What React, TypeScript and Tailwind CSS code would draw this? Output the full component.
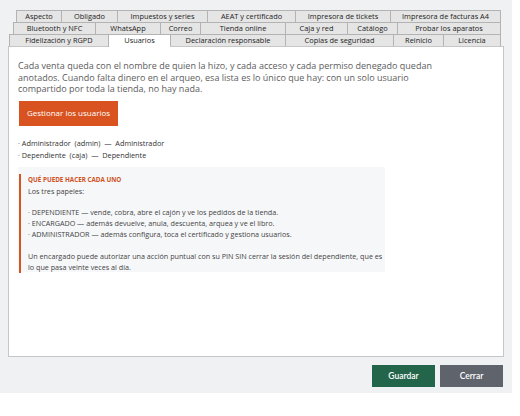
const rows: { label: string; w: number; active?: boolean }[][] = [
  [
    { label: "Aspecto", w: 45 },
    { label: "Obligado", w: 56 },
    { label: "Impuestos y series", w: 90 },
    { label: "AEAT y certificado", w: 88 },
    { label: "Impresora de tickets", w: 95 },
    { label: "Impresora de facturas A4", w: 111 },
  ],
  [
    { label: "Bluetooth y NFC", w: 82 },
    { label: "WhatsApp", w: 65 },
    { label: "Correo", w: 40 },
    { label: "Tienda online", w: 85 },
    { label: "Caja y red", w: 62 },
    { label: "Catálogo", w: 50 },
    { label: "Probar los aparatos", w: 104 },
  ],
  [
    { label: "Fidelización y RGPD", w: 99 },
    { label: "Usuarios", w: 62, active: true },
    { label: "Declaración responsable", w: 115 },
    { label: "Copias de seguridad", w: 108 },
    { label: "Reinicio", w: 50 },
    { label: "Licencia", w: 58 },
  ],
];

const offsets = ["ml-2", "ml-[5px]", "ml-px"];

function TabRow({ tabs, offset }: { tabs: typeof rows[number]; offset: string }) {
  return (
    <div className={`flex h-[12px] ${offset}`}>
      {tabs.map((t, i) => (
        <div
          key={t.label}
          style={{ width: t.w }}
          className={
            "flex items-center justify-center border-t border-l border-[#b3b3b3] text-[7.4px] leading-none text-[#222] whitespace-nowrap " +
            (i === tabs.length - 1 ? "border-r " : "") +
            (t.active ? "bg-white relative z-10 h-[13px]" : "bg-[#e5e5e5]")
          }
        >
          {t.label}
        </div>
      ))}
    </div>
  );
}

export default function App() {
  return (
    <div className="w-[520px] h-[416px] bg-white" style={{ fontFamily: '"Open Sans", sans-serif' }}>
      <div className="w-[512px] h-[393px] bg-[#f0f1f3] flex flex-col pt-[10px] px-2">
        <div className="pr-[3px]">
          <TabRow tabs={rows[0]} offset={offsets[0]} />
          <TabRow tabs={rows[1]} offset={offsets[1]} />
          <TabRow tabs={rows[2]} offset={offsets[2]} />
        </div>

        <div className="h-[311px] bg-white border border-[#c6c6c6] pl-[9px] pt-[13px]">
          <p className="text-[9px] leading-[11.5px] text-[#5c5c5c] whitespace-nowrap">
            Cada venta queda con el nombre de quien la hizo, y cada acceso y cada permiso denegado quedan
            <br />
            anotados. Cuando falta dinero en el arqueo, esa lista es lo único que hay: con un solo usuario
            <br />
            compartido por toda la tienda, no hay nada.
          </p>

          <button className="block mt-[6px] ml-px w-[99px] h-[25px] bg-[#d8531f] text-white text-[8px]">
            Gestionar los usuarios
          </button>

          <ul className="mt-[11px] text-[7.3px] leading-[12px] text-[#333] whitespace-pre">
            <li>· Administrador  (admin)  —  Administrador</li>
            <li>· Dependiente  (caja)  —  Dependiente</li>
          </ul>

          <div className="mt-[6px] w-[367px] h-[105px] bg-[#f6f7f9] pt-[7px] pl-px">
            <div className="border-l-2 border-[#d8531f] pl-[7px] text-[7.2px] leading-[10.9px] text-[#444] whitespace-nowrap">
              <div className="text-[6.3px] font-bold text-[#cf521e] leading-[12px]">QUÉ PUEDE HACER CADA UNO</div>
              <p>Los tres papeles:</p>
              <p className="mt-[10.9px]">· DEPENDIENTE — vende, cobra, abre el cajón y ve los pedidos de la tienda.</p>
              <p>· ENCARGADO — además devuelve, anula, descuenta, arquea y ve el libro.</p>
              <p>· ADMINISTRADOR — además configura, toca el certificado y gestiona usuarios.</p>
              <p className="mt-[10.9px]">
                Un encargado puede autorizar una acción puntual con su PIN SIN cerrar la sesión del dependiente, que es
                <br />
                lo que pasa veinte veces al día.
              </p>
            </div>
          </div>
        </div>

        <div className="flex justify-end gap-[5px] mt-[8px] pr-px" style={{ fontFamily: "Lato, sans-serif" }}>
          <button className="w-[63px] h-[22px] bg-[#23654a] text-white text-[8.5px] font-semibold">Guardar</button>
          <button className="w-[63px] h-[22px] bg-[#5f636b] text-white text-[8.5px] font-semibold">Cerrar</button>
        </div>
      </div>
    </div>
  );
}
